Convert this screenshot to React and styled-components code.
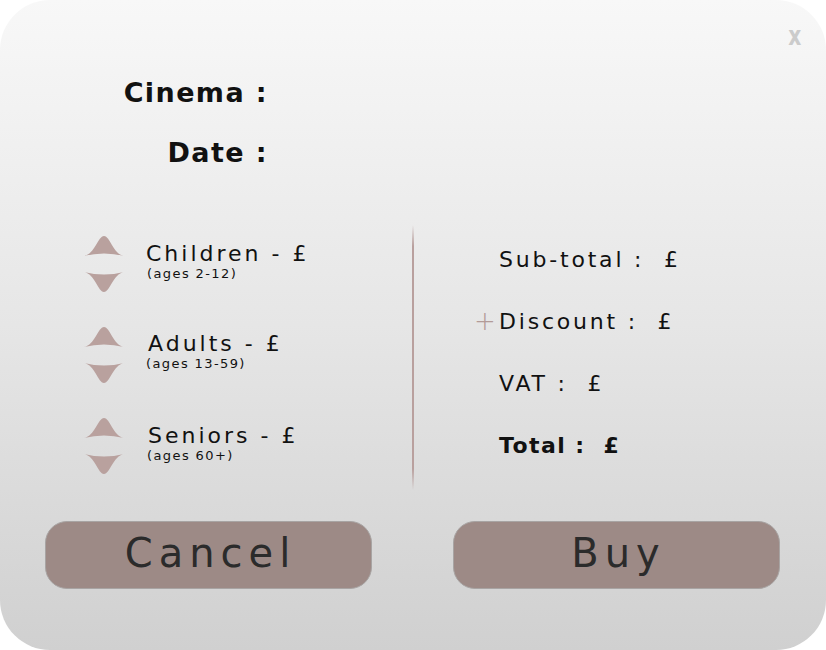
import React from 'react'
import styled, {createGlobalStyle} from 'styled-components'

const Global = createGlobalStyle`
   html, body {
      margin:0;
      padding:0;
      background:#ffffff;
   }
   body {
      font-family:"DejaVu Sans", "Noto Sans", sans-serif;
   }
`

const Card = styled.div`
   position:relative;
   width:826px;
   height:650px;
   box-sizing:border-box;
   border-radius:50px;
   background:linear-gradient(to bottom, #f8f8f8 0%, #e6e6e6 50%, #d0d0d0 100%);
   display:flex;
   flex-direction:column;
   padding-top:63px;
   color:#111;
`

const Close = styled.span`
   position:absolute;
   top:20px;
   right:23px;
   font-weight:900;
   font-size:27px;
   color:#cbcbcb;
   transform:scaleX(0.75);
`

const Info = styled.div`
   width:268px;
   display:flex;
   flex-direction:column;
   align-items:flex-end;
`

const InfoLine = styled.div`
   height:60px;
   line-height:60px;
   font-size:27px;
   font-weight:700;
   letter-spacing:1.4px;
`

const Middle = styled.div`
   margin-top:42px;
   height:265px;
   display:grid;
   grid-template-columns:412px 2px 1fr;
`

const Tickets = styled.div`
   padding-top:11px;
   padding-left:84px;
   display:flex;
   flex-direction:column;
   gap:35px;
`

const TicketRow = styled.div`
   height:56px;
   display:flex;
   align-items:center;
   gap:${p => p.$gap}px;
`

const Arrows = styled.div`
   width:40px;
   display:flex;
   flex-direction:column;
   gap:16px;
`

const Label = styled.div`
   display:flex;
   flex-direction:column;
   margin-top:${p => p.$shift}px;
`

const Name = styled.span`
   font-size:22px;
   line-height:25px;
   letter-spacing:3px;
`

const Ages = styled.span`
   font-size:13px;
   line-height:15px;
   letter-spacing:1.4px;
   margin-left:${p => p.$indent}px;
`

const Divider = styled.div`
   width:2px;
   background:linear-gradient(to bottom, rgba(185,160,158,0) 0%, #b9a09e 8%, #b9a09e 92%, rgba(185,160,158,0) 100%);
`

const Summary = styled.div`
   padding-top:3px;
   padding-left:85px;
   display:flex;
   flex-direction:column;
`

const SumLine = styled.div`
   height:62px;
   display:flex;
   align-items:center;
   font-size:22px;
   letter-spacing:${p => (p.$bold ? 1.4 : 2.8)}px;
   margin-left:${p => (p.$plus ? -25 : 0)}px;
   font-weight:${p => (p.$bold ? 700 : 400)};
   white-space:pre;
`

const Plus = styled.span`
   width:25px;
   color:#b39b98;
   font-size:26px;
   font-weight:300;
   letter-spacing:0;
`

const Buttons = styled.div`
   margin-top:31px;
   padding:0 46px 0 45px;
   display:grid;
   grid-template-columns:327px 327px;
   justify-content:space-between;
`

const Button = styled.button`
   height:68px;
   border-radius:22px;
   border:1px solid #a8a4a3;
   background:#9d8a86;
   color:#2b2b2b;
   font-family:"DejaVu Sans", "Noto Sans", sans-serif;
   font-size:40px;
   font-weight:400;
   letter-spacing:6px;
   display:flex;
   align-items:center;
   justify-content:center;
   padding:0 0 4px 4px;
   cursor:pointer;
`

const ArrowUp = () => (
   <svg width="40" height="20" viewBox="0 0 40 20">
      <path d="M0 20 C11 18 14 0 20 0 C26 0 29 18 40 20 Q20 15 0 20 Z" fill="#b9a19e" />
   </svg>
)

const ArrowDown = () => (
   <svg width="40" height="20" viewBox="0 0 40 20">
      <path d="M0 0 C11 2 14 20 20 20 C26 20 29 2 40 0 Q20 5 0 0 Z" fill="#b9a19e" />
   </svg>
)

const tickets = [
   {name:'Children - £', ages:'(ages 2-12)', gap:22, indent:1, shift:-6},
   {name:'Adults - £', ages:'(ages 13-59)', gap:24, indent:-2, shift:-8},
   {name:'Seniors - £', ages:'(ages 60+)', gap:24, indent:-1, shift:-6},
]

const App = () => (
   <>
      <Global />
      <Card>
         <Close>x</Close>
         <Info>
            <InfoLine>Cinema :</InfoLine>
            <InfoLine>Date :</InfoLine>
         </Info>
         <Middle>
            <Tickets>
               {tickets.map(t => (
                  <TicketRow key={t.name} $gap={t.gap}>
                     <Arrows>
                        <ArrowUp />
                        <ArrowDown />
                     </Arrows>
                     <Label $shift={t.shift}>
                        <Name>{t.name}</Name>
                        <Ages $indent={t.indent}>{t.ages}</Ages>
                     </Label>
                  </TicketRow>
               ))}
            </Tickets>
            <Divider />
            <Summary>
               <SumLine>Sub-total :  £</SumLine>
               <SumLine $plus><Plus>+</Plus>Discount :  £</SumLine>
               <SumLine>VAT :  £</SumLine>
               <SumLine $bold>Total :  £</SumLine>
            </Summary>
         </Middle>
         <Buttons>
            <Button>Cancel</Button>
            <Button>Buy</Button>
         </Buttons>
      </Card>
   </>
)

export default App
